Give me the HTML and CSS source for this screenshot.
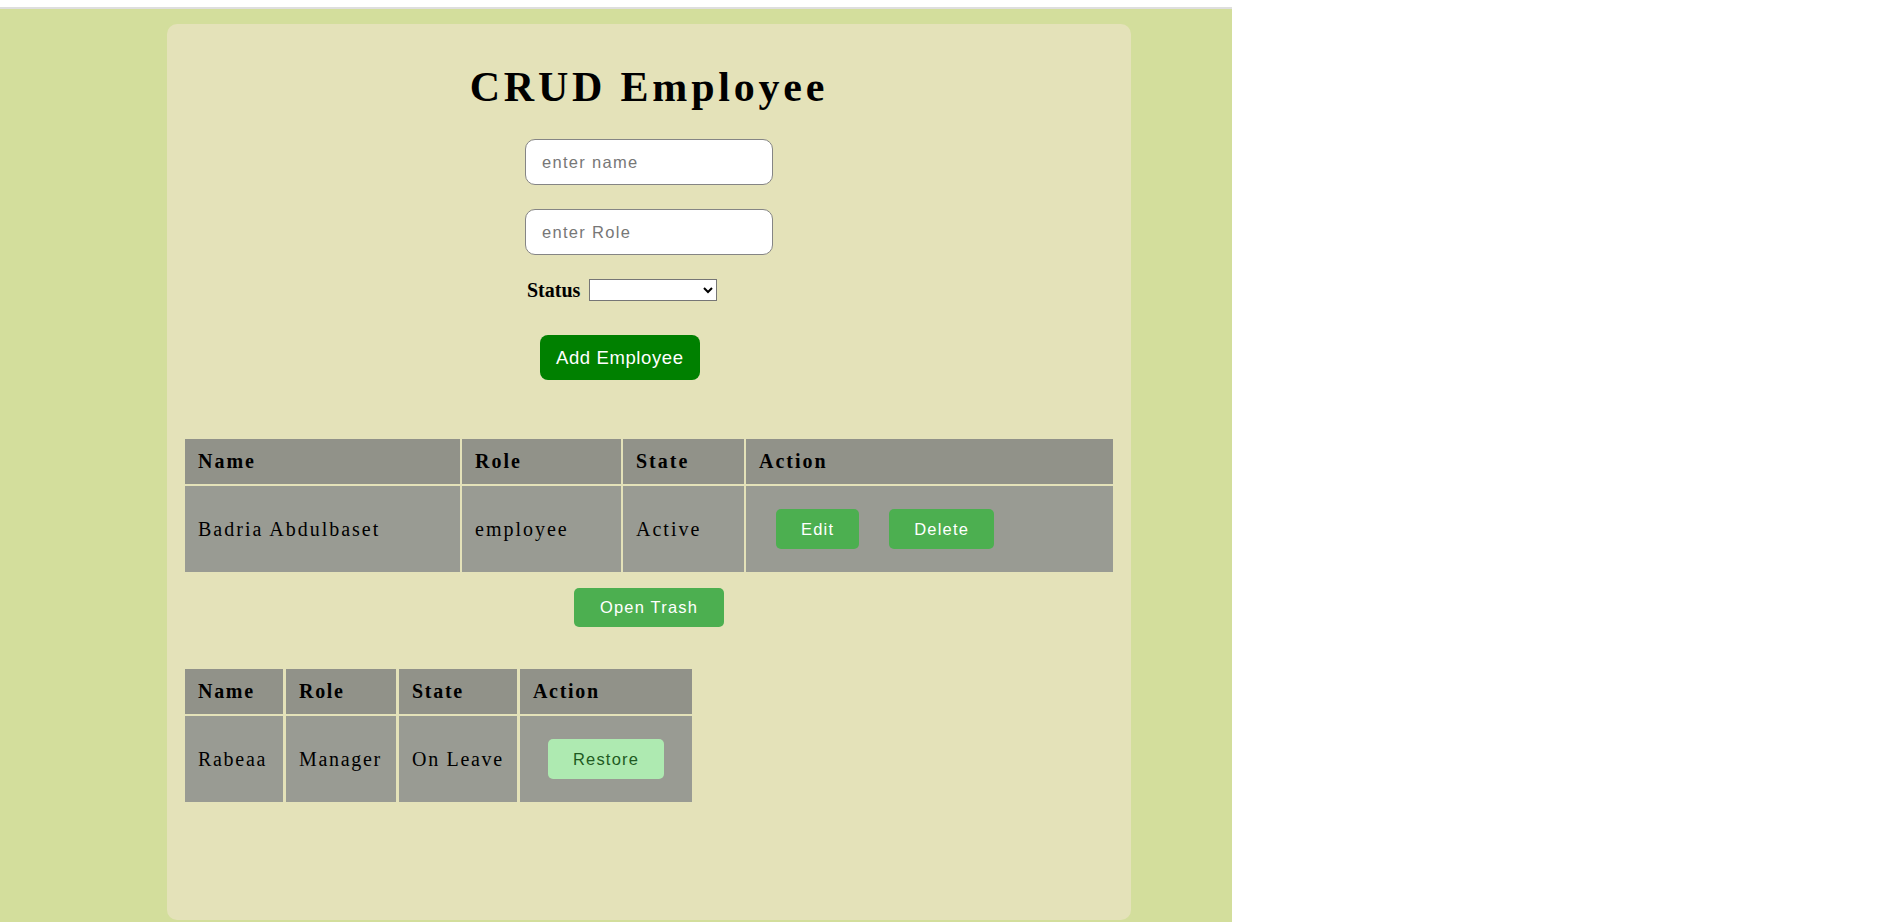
FILE: index.html
```html
<!DOCTYPE html>
<html lang="en">
<head>
<meta charset="utf-8">
<title>CRUD Employee</title>
<link rel="stylesheet" href="styles.css">
</head>
<body>
<div class="page">
  <div class="card">
    <h1 class="title">CRUD Employee</h1>
    <form class="form">
      <input class="field" type="text" placeholder="enter name">
      <input class="field field-gap" type="text" placeholder="enter Role">
      <div class="status-row">
        <label class="status-label" for="status">Status</label>
        <select class="status-select" id="status">
          <option value=""></option>
          <option>Active</option>
          <option>On Leave</option>
        </select>
      </div>
      <button type="button" class="btn btn-add">Add Employee</button>
    </form>

    <table class="grid grid-main">
      <thead>
        <tr>
          <th class="c-name">Name</th>
          <th class="c-role">Role</th>
          <th class="c-state">State</th>
          <th class="c-action">Action</th>
        </tr>
      </thead>
      <tbody>
        <tr>
          <td>Badria Abdulbaset</td>
          <td>employee</td>
          <td>Active</td>
          <td class="cell-action"><button type="button" class="btn btn-green">Edit</button><button type="button" class="btn btn-green">Delete</button></td>
        </tr>
      </tbody>
    </table>

    <div class="trash-bar">
      <button type="button" class="btn btn-green">Open Trash</button>
    </div>

    <table class="grid grid-trash">
      <thead>
        <tr>
          <th class="t-name">Name</th>
          <th class="t-role">Role</th>
          <th class="t-state">State</th>
          <th class="t-action">Action</th>
        </tr>
      </thead>
      <tbody>
        <tr>
          <td>Rabeaa</td>
          <td>Manager</td>
          <td>On Leave</td>
          <td><button type="button" class="btn btn-restore">Restore</button></td>
        </tr>
      </tbody>
    </table>
  </div>
</div>
</body>
</html>
```

FILE: styles.css
```css
html, body {
  margin: 0;
  padding: 0;
  background: #ffffff;
}

body {
  padding-top: 7px;
  font-family: "Liberation Serif", "Times New Roman", serif;
  color: #111;
}

.page {
  width: 1232px;
  box-sizing: border-box;
  border-top: 2px solid #dedede;
  background: #d3de9c;
  padding: 15px 101px 2px 167px;
}

.card {
  box-sizing: border-box;
  height: 896px;
  background: #e4e2b9;
  border-radius: 10px;
  padding: 16px;
}

.title {
  margin: 23px 0 28px;
  text-align: center;
  font-size: 42px;
  font-weight: bold;
  letter-spacing: 3.8px;
  line-height: normal;
  color: #000;
}

.form {
  width: 248px;
  margin: 0 auto 57px;
}

.field {
  display: block;
  box-sizing: border-box;
  width: 248px;
  height: 46px;
  margin: 0;
  padding: 0 16px;
  border: 1px solid #858585;
  border-radius: 10px;
  background: #fff;
  font-family: "Liberation Sans", Arial, sans-serif;
  font-size: 16.5px;
  letter-spacing: 1.3px;
  color: #222;
  outline: none;
}

.field::placeholder {
  color: #777;
}

.field-gap {
  margin-top: 24px;
}

.status-row {
  display: flex;
  align-items: center;
  height: 24px;
  margin: 23px 0 0 2px;
}

.status-label {
  font-size: 20px;
  font-weight: bold;
  color: #000;
  margin-right: 9px;
}

.status-select {
  box-sizing: border-box;
  width: 128px;
  height: 22px;
  margin: 0;
  border: 1px solid #767676;
  border-radius: 0;
  background: #fff;
  font-family: "Liberation Sans", Arial, sans-serif;
  font-size: 14px;
}

.btn {
  box-sizing: border-box;
  height: 40px;
  margin: 12px 15px;
  padding: 0 25px;
  border: none;
  border-radius: 5px;
  font-family: "Liberation Sans", Arial, sans-serif;
  font-size: 16.5px;
  letter-spacing: 1.2px;
  cursor: pointer;
  vertical-align: middle;
}

.btn-add {
  display: block;
  height: 45px;
  margin: 33px 15px 0;
  padding: 0 16px;
  border-radius: 8px;
  background: #008000;
  color: #fff;
  font-size: 18.5px;
  letter-spacing: 0.6px;
}

.btn-green {
  background: #4caf50;
  color: #fff;
}

.btn-restore {
  background: #aeeab1;
  color: #1e5a22;
}

.grid {
  border-spacing: 2px;
  font-size: 20px;
  letter-spacing: 2px;
}

.grid-main {
  width: 100%;
}

.grid-trash {
  border-spacing: 3px 2px;
  margin: 28px 0 0 -1px;
  letter-spacing: 1.7px;
}

.grid th,
.grid td {
  box-sizing: border-box;
  padding: 11px 13px;
  text-align: left;
  vertical-align: middle;
  white-space: nowrap;
}

.grid th {
  background: #919289;
  font-weight: bold;
  color: #000;
}

.grid td {
  background: #999b93;
  color: #000;
}

.grid td.cell-action {
  padding-left: 15px;
}

.grid td .btn {
  letter-spacing: 1.2px;
}

.c-name { width: 275px; }
.c-role { width: 159px; }
.c-state { width: 121px; }
.c-action { width: 367px; }

.t-name { width: 98px; }
.t-role { width: 110px; }
.t-state { width: 117px; }
.t-action { width: 171px; }

.trash-bar {
  margin-top: 2px;
  text-align: center;
}

.trash-bar .btn {
  height: 39px;
  padding: 0 26px;
}
```
